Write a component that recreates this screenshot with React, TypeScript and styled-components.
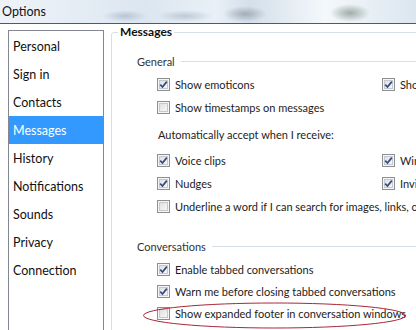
import * as React from "react";
import styled, { createGlobalStyle } from "styled-components";

const GlobalStyle = createGlobalStyle`
  html, body {
    margin: 0;
    padding: 0;
    background: #ffffff;
  }
`;

const navItems = [
  "Personal",
  "Sign in",
  "Contacts",
  "Messages",
  "History",
  "Notifications",
  "Sounds",
  "Privacy",
  "Connection",
];

const Window = styled.div`
  width: 416px;
  height: 330px;
  overflow: hidden;
  display: flex;
  flex-direction: column;
  background: #ffffff;
  font-family: Lato, "Liberation Sans", sans-serif;
  color: #111;
`;

const TitleBar = styled.div`
  flex: 0 0 23px;
  display: flex;
  align-items: center;
  padding-left: 2px;
  font-size: 12.5px;
  color: #101418;
  border-bottom: 1px solid #4f5a66;
  background:
    radial-gradient(ellipse 22px 6px at 125px 16px, rgba(150, 168, 188, 0.55), transparent),
    radial-gradient(ellipse 28px 6px at 185px 16px, rgba(150, 168, 188, 0.5), transparent),
    radial-gradient(ellipse 22px 8px at 245px 14px, rgba(120, 130, 140, 0.55), transparent),
    radial-gradient(ellipse 20px 9px at 350px 13px, rgba(110, 125, 110, 0.6), transparent),
    linear-gradient(to right, #eef3f8 0%, #dce6f0 35%, #e9f0f7 52%, #d3dfea 60%, #f4f8fb 78%, #dbe6f0 100%);
`;

const Content = styled.div`
  flex: 1;
  min-height: 0;
  display: flex;
  align-items: stretch;
  padding-left: 8px;
`;

const Sidebar = styled.div`
  box-sizing: border-box;
  flex: 0 0 96px;
  margin-top: 6px;
  padding-top: 1px;
  border: 1px solid #828790;
  border-bottom: none;
`;

const NavItem = styled.div<{ $active?: boolean }>`
  height: 28px;
  display: flex;
  align-items: center;
  padding-left: 4px;
  font-size: 12.5px;
  color: ${(p) => (p.$active ? "#ffffff" : "#111")};
  background: ${(p) => (p.$active ? "#3399ff" : "transparent")};
`;

const Main = styled.div`
  flex: 1;
  min-width: 0;
  margin-left: 7px;
  margin-top: 1px;
  overflow: hidden;
`;

const GroupBox = styled.fieldset`
  box-sizing: border-box;
  width: calc(100% + 20px);
  height: calc(100% + 20px);
  margin: 0;
  padding: 0;
  border: 1px solid #d5dfe5;
  border-radius: 3px;
`;

const GroupTitle = styled.legend`
  margin-left: 6px;
  padding: 0 2px;
  font-size: 12px;
  line-height: 14px;
  font-weight: 700;
  color: #111;
`;

const GroupBody = styled.div`
  padding-left: 25px;
`;

const SectionHeader = styled.div<{ $top: number }>`
  display: flex;
  align-items: center;
  gap: 6px;
  height: 14px;
  margin-top: ${(p) => p.$top}px;
  font-size: 11px;
  color: #333;
  &::after {
    content: "";
    flex: 1;
    border-top: 1px solid #d5dfe5;
  }
`;

const OptionGrid = styled.div<{ $top: number; $row: number }>`
  display: grid;
  grid-template-columns: 225px 1fr;
  grid-auto-rows: ${(p) => p.$row}px;
  margin-top: ${(p) => p.$top}px;
  padding-left: 20px;
`;

const Hint = styled.div`
  height: 23px;
  display: flex;
  align-items: center;
  margin-top: 4px;
  padding-left: 21px;
  font-size: 11px;
  color: #222;
  white-space: nowrap;
`;

const CheckRow = styled.label<{ $wide?: boolean }>`
  position: relative;
  display: flex;
  align-items: center;
  gap: 5px;
  font-size: 11px;
  color: #1c1c1c;
  white-space: nowrap;
  grid-column: ${(p) => (p.$wide ? "1 / -1" : "auto")};
`;

const Box = styled.span`
  box-sizing: border-box;
  flex: 0 0 13px;
  width: 13px;
  height: 13px;
  display: flex;
  align-items: center;
  justify-content: center;
  border: 1px solid #8e8f8f;
  background: linear-gradient(135deg, #d8dadd 0%, #eef0f2 60%, #fbfbfb 100%);
  box-shadow: inset 0 0 0 1px #f6f6f6, inset 0 0 0 2px #c4c9cf;
`;

const Annotation = styled.svg`
  position: absolute;
  left: -14px;
  top: 0px;
  overflow: visible;
  pointer-events: none;
`;

function Check({ checked, label, wide, children }: { checked?: boolean; label: string; wide?: boolean; children?: React.ReactNode }) {
  return (
    <CheckRow $wide={wide}>
      <Box>
        {checked && (
          <svg width="9" height="9" viewBox="0 0 9 9">
            <path d="M1.2 4.6 L3.5 7 L7.8 1.6" fill="none" stroke="#34497e" strokeWidth="1.7" />
          </svg>
        )}
      </Box>
      {label}
      {children}
    </CheckRow>
  );
}

export default function App() {
  return (
    <Window>
      <GlobalStyle />
      <TitleBar>Options</TitleBar>
      <Content>
        <Sidebar>
          {navItems.map((item) => (
            <NavItem key={item} $active={item === "Messages"}>
              {item}
            </NavItem>
          ))}
        </Sidebar>
        <Main>
          <GroupBox>
            <GroupTitle>Messages</GroupTitle>
            <GroupBody>
              <SectionHeader $top={15}>General</SectionHeader>
              <OptionGrid $top={5} $row={23}>
                <Check checked label="Show emoticons" />
                <Check checked label="Show winks" />
                <Check label="Show timestamps on messages" wide />
              </OptionGrid>
              <Hint>Automatically accept when I receive:</Hint>
              <OptionGrid $top={3} $row={23}>
                <Check checked label="Voice clips" />
                <Check checked label="Winks" />
                <Check checked label="Nudges" />
                <Check checked label="Invitations" />
                <Check label="Underline a word if I can search for images, links, or more info" wide />
              </OptionGrid>
              <SectionHeader $top={21}>Conversations</SectionHeader>
              <OptionGrid $top={5} $row={22}>
                <Check checked label="Enable tabbed conversations" wide />
                <Check checked label="Warn me before closing tabbed conversations" wide />
                <Check label="Show expanded footer in conversation windows" wide>
                  <Annotation width="263" height="27" viewBox="0 0 263 27">
                    <ellipse cx="131.5" cy="13.5" rx="131" ry="12.5" fill="none" stroke="#a8283a" strokeWidth="1" />
                  </Annotation>
                </Check>
              </OptionGrid>
            </GroupBody>
          </GroupBox>
        </Main>
      </Content>
    </Window>
  );
}
